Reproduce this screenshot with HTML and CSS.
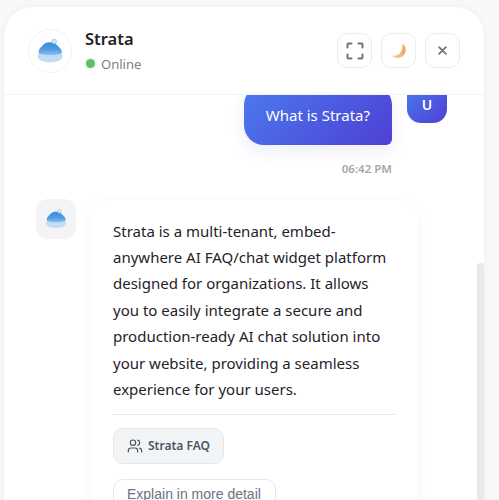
FILE: index.html
```html
<!DOCTYPE html>
<html lang="en">
  <head>
    <meta charset="UTF-8" />
    <meta name="viewport" content="width=device-width, initial-scale=1.0" />
    <title>Strata</title>
    <link rel="stylesheet" href="styles.css">
  </head>
  <body>
    <svg class="defs" width="0" height="0">
      <defs>
        <linearGradient id="dome" x1="0" y1="0" x2="0" y2="1">
          <stop offset="0" stop-color="#3a8bdc" />
          <stop offset="0.55" stop-color="#4f9be2" />
          <stop offset="1" stop-color="#8dbfec" />
        </linearGradient>
      </defs>
      <symbol id="strata-logo" viewBox="0 0 44 44">
        <ellipse cx="22" cy="27.500" rx="13" ry="6.500" fill="#c3dcf3" />
        <path d="M10 24c0-5 3.500-6.500 5.500-9 2-3 11-3 13 0 2 2.500 6 4 6 9-3 3-21.500 3-24.500 0z" fill="url(#dome)" />
        <circle cx="26.500" cy="12" r="2.300" fill="#dbeaf7" stroke="#8fbce6" stroke-width="0.800" />
      </symbol>
    </svg>
    <div class="widget">
      <header class="top">
        <div class="logo-ring">
          <svg width="44" height="44"><use href="#strata-logo" /></svg>
        </div>
        <div class="title-block">
          <h1 class="title">Strata</h1>
          <div class="status"><span class="dot"></span>Online</div>
        </div>
        <div class="actions">
          <button class="icon-btn" aria-label="Fullscreen">
            <svg width="18" height="18" viewBox="0 0 18 18" fill="none" stroke="#6b7280" stroke-width="2" stroke-linecap="round" stroke-linejoin="round">
              <path d="M1.500 5.500v-3a1 1 0 0 1 1-1h3M12.500 1.500h3a1 1 0 0 1 1 1v3M16.500 12.500v3a1 1 0 0 1-1 1h-3M5.500 16.500h-3a1 1 0 0 1-1-1v-3" />
            </svg>
          </button>
          <button class="icon-btn" aria-label="Dark mode">
            <svg width="16" height="16" viewBox="0 0 16 16">
              <defs>
                <linearGradient id="moon" x1="0" y1="1" x2="1" y2="0">
                  <stop offset="0" stop-color="#f8cd90" />
                  <stop offset="1" stop-color="#eb9c45" />
                </linearGradient>
              </defs>
              <path d="M11.500 0.800c3.600 2.600 4.300 7.400 1.800 10.800-2.500 3.500-7.300 4.300-10.800 2.300-.7-.4-1.300-.9-1.800-1.400 2.800.6 5.800.1 7.800-1.700 2.400-2.200 3.500-6 3-10z" fill="url(#moon)" />
            </svg>
          </button>
          <button class="icon-btn" aria-label="Close">
            <svg width="9" height="9" viewBox="0 0 10 10" fill="none" stroke="#6b7280" stroke-width="1.900" stroke-linecap="round">
              <path d="M1.200 1.200l7.600 7.600M8.800 1.200l-7.600 7.600" />
            </svg>
          </button>
        </div>
      </header>

      <div class="messages">
        <div class="messages-inner">
          <div class="user-row">
            <div class="user-col">
              <div class="user-bubble">What is Strata?</div>
              <div class="time">06:42 PM</div>
            </div>
            <div class="user-avatar">U</div>
          </div>

          <div class="bot-row">
            <div class="bot-avatar">
              <svg width="34" height="34"><use href="#strata-logo" /></svg>
            </div>
            <div class="bot-bubble">
              <p class="answer">Strata is a multi-tenant, embed-anywhere AI FAQ/chat widget platform designed for organizations. It allows you to easily integrate a secure and production-ready AI chat solution into your website, providing a seamless experience for your users.</p>
              <div class="divider"></div>
              <div class="chip">
                <svg width="16" height="16" viewBox="0 0 24 24" fill="none" stroke="#4b5563" stroke-width="1.800" stroke-linecap="round" stroke-linejoin="round">
                  <circle cx="9" cy="7" r="4" />
                  <path d="M2 21v-2a4 4 0 0 1 4-4h6a4 4 0 0 1 4 4v2" />
                  <path d="M16 3.100a4 4 0 0 1 0 7.800" />
                  <path d="M22 21v-2a4 4 0 0 0-3-3.900" />
                </svg>
                Strata FAQ
              </div>
              <button class="suggest">Explain in more detail</button>
            </div>
          </div>
        </div>
        <div class="thumb"></div>
      </div>
    </div>
  </body>
</html>
```

FILE: styles.css
```css
html,
body {
  height: 100%;
}
body {
  margin: 0;
  overflow: hidden;
  background: #f8f8f9;
  font-family: "Noto Sans", "Open Sans", sans-serif;
  color: #1f2328;
}
.defs {
  display: block;
  height: 0;
}
.widget {
  width: 480px;
  height: 640px;
  margin: 7px 0 0 4px;
  background: #fff;
  border-radius: 28px 28px 0 0;
  box-shadow: 0 0 6px rgba(0, 0, 0, 0.05);
  display: flex;
  flex-direction: column;
  overflow: hidden;
}
.top {
  height: 88px;
  flex: none;
  box-sizing: border-box;
  display: flex;
  align-items: center;
  padding: 0 24px 0 24px;
  border-bottom: 1px solid #f3f3f5;
}
.logo-ring {
  width: 44px;
  height: 44px;
  flex: none;
  box-sizing: border-box;
  border: 1px solid #f1f1f4;
  border-radius: 50%;
  display: flex;
  align-items: center;
  justify-content: center;
  margin-right: 13px;
}
.title-block {
  flex: 1;
}
.title {
  margin: 0;
  font-size: 16.500px;
  font-weight: 600;
  line-height: 22px;
  color: #1f2328;
}
.status {
  display: flex;
  align-items: center;
  font-size: 13px;
  line-height: 20px;
  margin-top: 4px;
  color: #7a7f88;
}
.dot {
  width: 9px;
  height: 9px;
  border-radius: 50%;
  background: #5cc163;
  box-shadow: 0 0 0 2px #f1f5fa;
  margin: 0 6px 0 1px;
}
.actions {
  display: flex;
  gap: 9px;
}
.icon-btn {
  width: 35px;
  height: 35px;
  padding: 0;
  background: #fff;
  border: 1px solid #ececef;
  border-radius: 10px;
  display: flex;
  align-items: center;
  justify-content: center;
}
.messages {
  flex: 1;
  position: relative;
  overflow: hidden;
}
.messages-inner {
  margin-top: -10px;
  padding: 0 37px 0 32px;
}
.user-row {
  display: flex;
  justify-content: flex-end;
  gap: 15px;
}
.user-col {
  display: flex;
  flex-direction: column;
  align-items: flex-end;
}
.user-bubble {
  height: 60px;
  box-sizing: border-box;
  padding: 0 22px;
  display: flex;
  align-items: center;
  font-size: 15px;
  color: #fff;
  border-radius: 20px 20px 6px 20px;
  background: linear-gradient(135deg, #4a7bee, #4f3fd4);
  box-shadow: 0 6px 16px rgba(79, 70, 229, 0.1);
}
.time {
  margin-top: 15px;
  font-size: 11.500px;
  font-weight: 600;
  line-height: 17px;
  color: #a3a6ad;
}
.user-avatar {
  width: 40px;
  height: 38px;
  flex: none;
  border-radius: 6px 6px 14px 14px;
  background: linear-gradient(135deg, #4a7bee, #4f3fd4);
  color: #fff;
  font-size: 14px;
  font-weight: 600;
  display: flex;
  align-items: center;
  justify-content: center;
}
.bot-row {
  display: flex;
  gap: 15px;
  margin-top: 22px;
}
.bot-avatar {
  width: 40px;
  height: 40px;
  flex: none;
  border-radius: 12px;
  background: #f4f4f6;
  display: flex;
  align-items: center;
  justify-content: center;
}
.bot-bubble {
  width: 327px;
  box-sizing: border-box;
  margin-top: 1px;
  padding: 17.500px 22px 20px;
  border-radius: 20px;
  background: #fff;
  box-shadow: 0 2px 14px rgba(0, 0, 0, 0.04);
}
.answer {
  margin: 0;
  font-size: 15px;
  line-height: 26.400px;
  color: #1f2328;
}
.divider {
  height: 1px;
  background: #e5e6e9;
  margin: 11.500px 0 13px;
}
.chip {
  width: fit-content;
  height: 36px;
  box-sizing: border-box;
  padding: 0 13px;
  display: flex;
  align-items: center;
  gap: 5px;
  font-size: 12px;
  font-weight: 600;
  color: #4b5563;
  background: #f3f4f6;
  border: 1px solid #e5e7eb;
  border-radius: 10px;
}
.suggest {
  display: block;
  margin-top: 15px;
  height: 30px;
  padding: 0 14px 0 13px;
  font-family: "Liberation Sans", sans-serif;
  font-size: 14px;
  color: #6b7280;
  background: #fff;
  border: 1px solid #e5e7eb;
  border-radius: 10px;
}
.thumb {
  position: absolute;
  top: 168px;
  right: 0;
  width: 7px;
  height: 300px;
  border-radius: 4px;
  background: #e9e9ec;
}
```
